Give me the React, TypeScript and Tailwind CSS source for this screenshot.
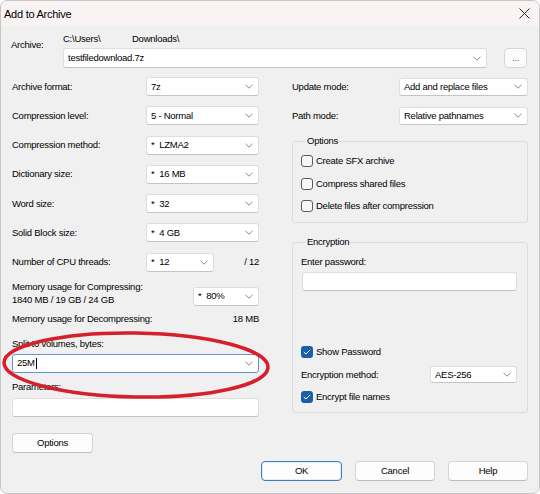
import React from 'react';
import clsx from 'clsx';

function Chevron() {
  return (
    <svg width="8" height="5" viewBox="0 0 8 5" className="shrink-0">
      <path d="M0.5 0.8 L4 4.2 L7.5 0.8" fill="none" stroke="#8a8a8a" strokeWidth="1" />
    </svg>
  );
}

interface ComboProps {
  value?: string;
  className?: string;
  focused?: boolean;
}

function Combo({ value = '', className, focused }: ComboProps) {
  return (
    <div
      className={clsx(
        'flex items-center justify-between bg-white border rounded-[3px] pl-[4px] pr-[5px] whitespace-pre',
        focused ? 'border-[#5f97d3]' : 'border-[#dedede] border-b-[#c4c4c4]',
        className
      )}
    >
      <span className="flex items-center">
        {value}
        {focused && <span className="ml-[1px] inline-block w-px h-[11px] bg-black" />}
      </span>
      <Chevron />
    </div>
  );
}

function CheckBox({ checked, label }: { checked?: boolean; label: string }) {
  return (
    <div className="flex items-center gap-[3px] h-[14px]">
      {checked ? (
        <span className="flex items-center justify-center w-[12px] h-[12px] rounded-[3px] bg-[#1b5fab]">
          <svg width="8" height="6" viewBox="0 0 8 6">
            <path d="M0.8 3 L3 5 L7.2 0.8" fill="none" stroke="#fff" strokeWidth="1" />
          </svg>
        </span>
      ) : (
        <span className="w-[12px] h-[12px] rounded-[3px] border border-[#5c5c5c] bg-[#f7f7f7]" />
      )}
      <span>{label}</span>
    </div>
  );
}

function Button({ label, className }: { label: string; className?: string }) {
  return (
    <button
      className={clsx(
        'flex items-center justify-center h-[20px] bg-[#fdfdfd] border rounded-[4px]',
        className ?? 'border-[#d3d3d3] border-b-[#bdbdbd]'
      )}
    >
      {label}
    </button>
  );
}

const leftRows: [string, string][] = [
  ['Archive format:', '7z'],
  ['Compression level:', '5 - Normal'],
  ['Compression method:', '*  LZMA2'],
  ['Dictionary size:', '*  16 MB'],
  ['Word size:', '*  32'],
  ['Solid Block size:', '*  4 GB'],
];

export default function App() {
  return (
    <div className="relative w-[540px] h-[494px] overflow-hidden bg-[#f0f0f0] border border-[#c6c6c6] rounded-[7px] text-[9.5px] leading-[12px] tracking-[-0.25px] text-black font-['Liberation_Sans',Arial,sans-serif]">
      {/* title bar */}
      <div className="flex items-center justify-between h-[25px] pl-[3px] pr-[9px] bg-[#f9f3f3]">
        <span className="text-[11px] tracking-[-0.25px]">Add to Archive</span>
        <svg width="11" height="11" viewBox="0 0 11 11">
          <path d="M0.5 0.5 L10.5 10.5 M10.5 0.5 L0.5 10.5" stroke="#222" strokeWidth="1" />
        </svg>
      </div>

      {/* archive path */}
      <div className="flex pl-[10px] mt-[7px]">
        <div className="w-[52px] pt-[6px]">Archive:</div>
        <div className="w-[424px]">
          <div className="flex h-[12px]">
            <span className="w-[69px]">C:\Users\</span>
            <span>Downloads\</span>
          </div>
          <Combo value="testfiledownload.7z" className="mt-[3px] h-[20px]" />
        </div>
        <button className="ml-[17px] mt-[15px] w-[23px] h-[20px] flex items-center justify-center bg-[#fbfbfb] border border-[#d6d6d6] rounded-[4px] text-[#555]">
          ...
        </button>
      </div>

      {/* main */}
      <div className="flex pl-[11px] mt-[9px]">
        {/* left column */}
        <div className="w-[247px] flex flex-col">
          <div className="flex flex-col gap-[10.3px]">
            {leftRows.map(([label, value]) => (
              <div key={label} className="flex items-center justify-between h-[19px]">
                <span>{label}</span>
                <Combo value={value} className="w-[113px] h-[19px]" />
              </div>
            ))}
            <div className="flex items-center h-[19px]">
              <span className="w-[134px]">Number of CPU threads:</span>
              <Combo value="*  12" className="w-[68px] h-[19px]" />
              <span className="ml-auto">/ 12</span>
            </div>
          </div>

          <div className="flex items-end justify-between mt-[8px]">
            <div className="leading-[13px]">
              <div>Memory usage for Compressing:</div>
              <div>1840 MB / 19 GB / 24 GB</div>
            </div>
            <Combo value="*  80%" className="w-[66px] h-[19px]" />
          </div>

          <div className="flex justify-between mt-[7px]">
            <span>Memory usage for Decompressing:</span>
            <span>18 MB</span>
          </div>

          <div className="mt-[13px]">Split to volumes, bytes:</div>
          <Combo value="25M" focused className="mt-[4px] h-[19px]" />

          <div className="mt-[8px]">Parameters:</div>
          <div className="mt-[5px] h-[19px] bg-white border border-[#dedede] border-b-[#c4c4c4] rounded-[3px]" />

          <Button label="Options" className="mt-[16px] w-[81px] border-[#d3d3d3] border-b-[#bdbdbd]" />
        </div>

        {/* right column */}
        <div className="ml-[33px] w-[236px] flex flex-col">
          <div className="flex items-center justify-between h-[19px]">
            <span>Update mode:</span>
            <Combo value="Add and replace files" className="w-[129px] h-[18px]" />
          </div>
          <div className="flex items-center justify-between h-[19px] mt-[10px]">
            <span>Path mode:</span>
            <Combo value="Relative pathnames" className="w-[129px] h-[18px]" />
          </div>

          <fieldset className="mt-[10px] border border-[#dcdcdc] rounded-[3px] pl-[8px] pb-[9px]">
            <legend className="ml-[5px] px-px leading-[12px]">Options</legend>
            <div className="flex flex-col gap-[8.5px] pt-[7px]">
              <CheckBox label="Create SFX archive" />
              <CheckBox label="Compress shared files" />
              <CheckBox label="Delete files after compression" />
            </div>
          </fieldset>

          <fieldset className="mt-[13px] border border-[#dcdcdc] rounded-[3px] pl-[8px] pr-[10px] pb-[8px]">
            <legend className="ml-[5px] px-px leading-[12px]">Encryption</legend>
            <div className="pt-[8px]">Enter password:</div>
            <div className="mt-[4px] ml-px h-[19px] bg-white border border-[#dedede] border-b-[#c4c4c4] rounded-[3px]" />
            <div className="mt-[54px]">
              <CheckBox checked label="Show Password" />
            </div>
            <div className="flex items-center justify-between mt-[7px] h-[17px]">
              <span>Encryption method:</span>
              <Combo value="AES-256" className="w-[87px] h-[17px]" />
            </div>
            <div className="mt-[7px]">
              <CheckBox checked label="Encrypt file names" />
            </div>
          </fieldset>
        </div>
      </div>

      {/* dialog buttons */}
      <div className="flex justify-end gap-[13px] pr-[11px] mt-[8px]">
        <Button label="OK" className="w-[81px] border-[#3f7cc2] shadow-[inset_0_0_0_1px_#e3eefa]" />
        <Button label="Cancel" className="w-[80px] border-[#d3d3d3] border-b-[#bdbdbd]" />
        <Button label="Help" className="w-[80px] border-[#d3d3d3] border-b-[#bdbdbd]" />
      </div>

      {/* red annotation */}
      <svg
        className="absolute left-0 top-[328px] pointer-events-none"
        width="272"
        height="74"
        viewBox="0 0 272 74"
      >
        <ellipse
          cx="135"
          cy="36"
          rx="132"
          ry="32"
          fill="none"
          stroke="#d71f2b"
          strokeWidth="3.5"
          transform="rotate(1 135 36)"
        />
      </svg>
    </div>
  );
}
